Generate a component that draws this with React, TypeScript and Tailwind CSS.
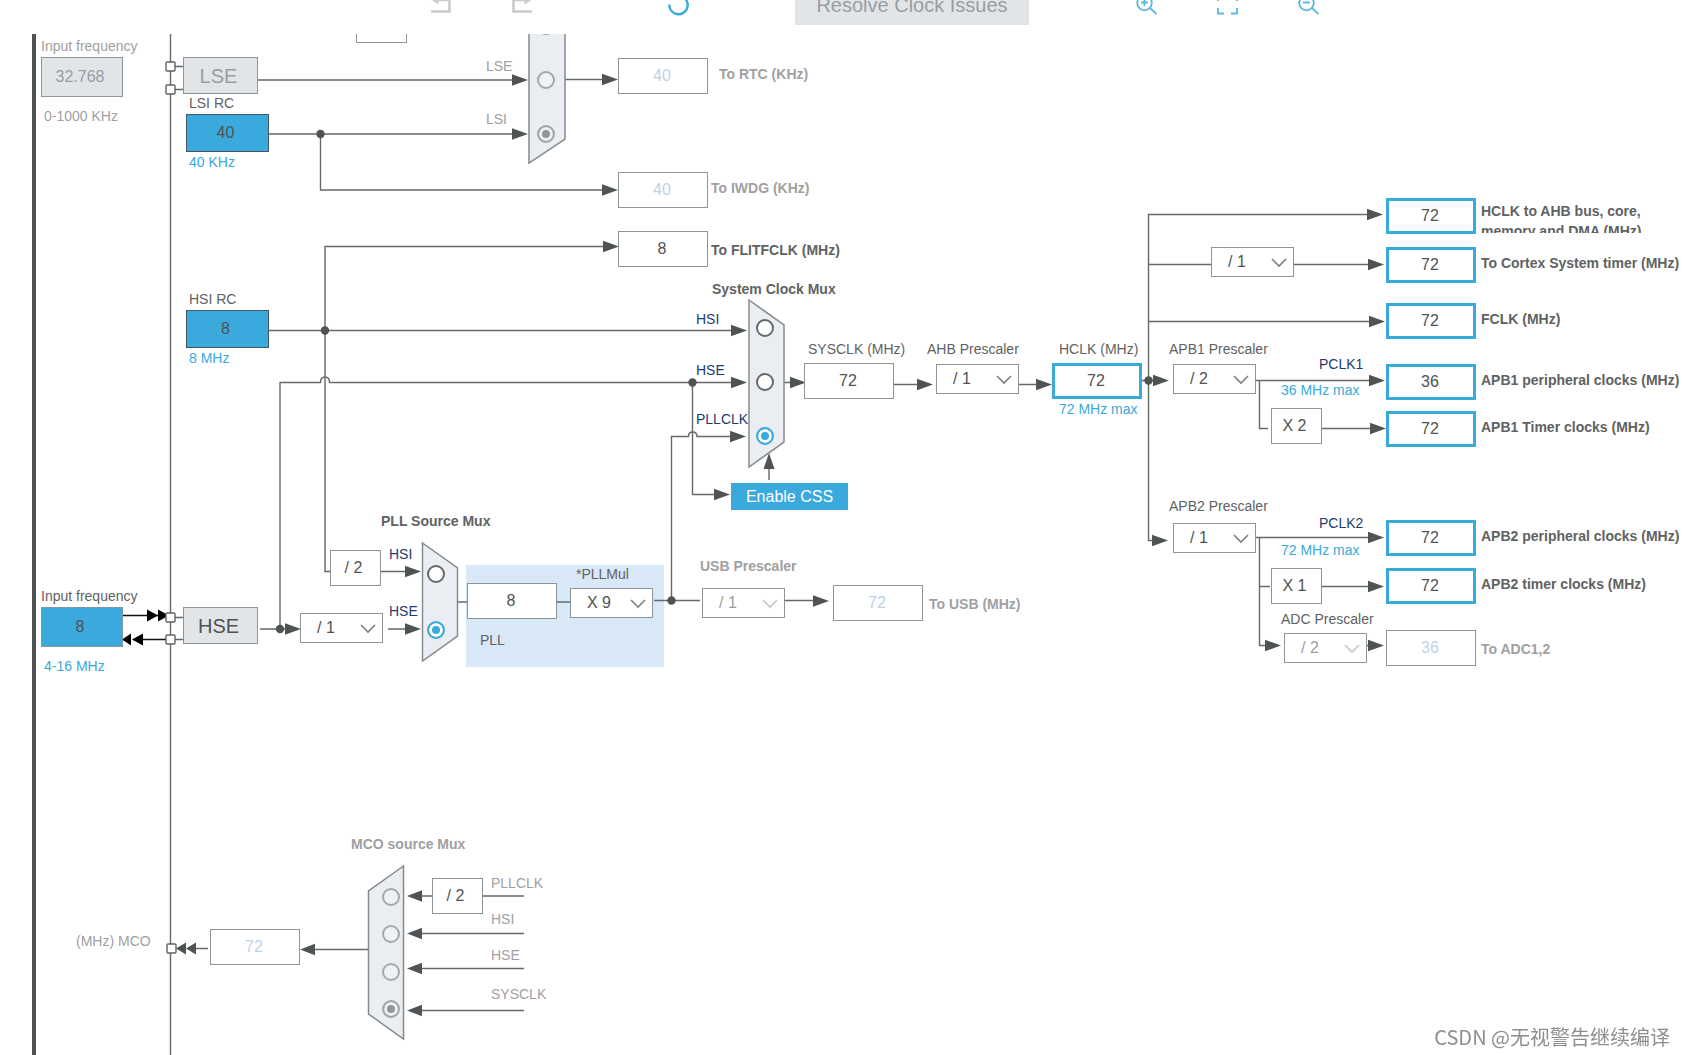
import { useState } from 'react';
import type { ReactNode } from 'react';
import clsx from 'clsx';

type Tone = 'normal' | 'muted' | 'active' | 'source' | 'input' | 'off';

const fieldTones: Record<Tone, string> = {
  normal: 'h-9 w-[90px] border border-[#8d949b] bg-white text-[#505353]',
  muted: 'h-9 w-[90px] border border-[#8d949b] bg-white text-[#bcd2ea]',
  active: 'h-9 w-[90px] border-3 border-[#3aa9dc] bg-white text-[#505353]',
  source: 'h-[38px] w-[83px] border border-[#3f5864] bg-[#3aa9dc] text-[#505353]',
  input: 'h-10 w-[82px] border border-[#7e98a4] bg-[#3aa9dc] text-[#505353]',
  off: 'h-10 w-[82px] border border-[#8d949b] bg-[#e1e5e8] text-[#989ea2]',
};

interface FieldProps {
  id: string;
  name: string;
  value: string;
  className?: string;
  tone?: Tone;
}

// Editable frequency box
function Field({ id, name, value, className, tone = 'normal' }: FieldProps) {
  const [text, setText] = useState(value);

  return (
    <input
      id={id}
      type="text"
      aria-label={name}
      value={text}
      disabled={tone === 'muted' || tone === 'off'}
      onChange={(e) => setText(e.target.value)}
      className={clsx('shrink-0 pr-0.5 text-center text-base outline-none', fieldTones[tone], className)}
    />
  );
}

type LabelTone = 'dark' | 'grey' | 'blue' | 'navy';

const labelTones: Record<LabelTone, string> = {
  dark: 'text-[#606262]',
  grey: 'text-[#a0a0a2]',
  blue: 'text-[#3aa9dc]',
  navy: 'text-[#1d3c6b]',
};

interface LabelProps {
  htmlFor: string;
  className?: string;
  tone?: LabelTone;
  bold?: boolean;
  children: ReactNode;
}

function Label({ htmlFor, className, tone = 'dark', bold, children }: LabelProps) {
  return (
    <label
      htmlFor={htmlFor}
      className={clsx('text-sm leading-5 whitespace-nowrap', bold && 'font-bold', labelTones[tone], className)}
    >
      {children}
    </label>
  );
}

interface SourceProps {
  id: string;
  label: string;
  value: string;
  note: string;
  tone: Tone;
  className: string;
}

// Oscillator: name above the box, allowed range below it
function Source({ id, label, value, note, tone, className }: SourceProps) {
  const external = tone !== 'source';
  const off = tone === 'off';

  return (
    <div className={clsx('absolute flex flex-col items-start', className)}>
      <Label htmlFor={id} tone={off ? 'grey' : 'dark'} className={clsx('mb-px', !external && 'pl-[3px]')}>{label}</Label>
      <Field id={id} name={label} value={value} tone={tone} className="pr-1" />
      <Label htmlFor={id} tone={off ? 'grey' : 'blue'} className={clsx('pl-[3px]', external && 'mt-[9px]')}>{note}</Label>
    </div>
  );
}

interface OutputProps {
  id: string;
  value: string;
  tone?: Tone;
  low?: boolean;
  className: string;
  children: ReactNode;
}

// Clock consumer: box followed by its caption
function Output({ id, value, tone = 'active', low, className, children }: OutputProps) {
  return (
    <div className={clsx('absolute flex items-center', className)}>
      <Field id={id} name={id} value={value} tone={tone} />
      <Label
        htmlFor={id}
        tone={tone === 'muted' ? 'grey' : 'dark'}
        bold
        className={clsx('max-h-8 overflow-hidden', low ? 'mt-0.5' : 'mb-1')}
      >
        {children}
      </Label>
    </div>
  );
}

interface PrescalerProps {
  id: string;
  name: string;
  value: string;
  options: string[];
  className: string;
  disabled?: boolean;
}

function Prescaler({ id, name, value, options, className, disabled }: PrescalerProps) {
  return (
    <div className={clsx('absolute h-[30px] w-[83px]', className)}>
      <select
        id={id}
        aria-label={name}
        defaultValue={value}
        disabled={disabled}
        className={clsx(
          'h-full w-full appearance-none border border-[#8d949b] bg-white pl-4 text-base leading-5 opacity-100 outline-none',
          disabled ? 'text-[#9b9fa2]' : 'text-[#505353]'
        )}
      >
        {options.map((option) => (
          <option key={option}>{option}</option>
        ))}
      </select>
      <svg
        width="16"
        height="10"
        viewBox="0 0 16 10"
        fill="none"
        className={clsx('pointer-events-none absolute top-[11px] right-[7px]', disabled ? 'text-[#c4c6c8]' : 'text-[#7c8082]')}
      >
        <path d="M1 1L8 8L15 1" stroke="currentColor" strokeWidth="1.6" />
      </svg>
    </div>
  );
}

interface MuxInputProps {
  id: string;
  group: string;
  name: string;
  className: string;
  checked?: boolean;
  disabled?: boolean;
}

function MuxInput({ id, group, name, className, checked, disabled }: MuxInputProps) {
  return (
    <input
      id={id}
      type="radio"
      name={group}
      aria-label={name}
      defaultChecked={checked}
      disabled={disabled}
      className={clsx(
        'absolute size-[18px] appearance-none rounded-full border-2',
        disabled
          ? 'border-[#a3a8ac] bg-[#f0f1f3] checked:bg-[#8f979d] checked:shadow-[inset_0_0_0_3px_#f0f1f3]'
          : 'border-[#66696a] bg-white checked:border-[#3aa9dc] checked:bg-[#3aa9dc] checked:shadow-[inset_0_0_0_3px_white]',
        className
      )}
    />
  );
}

// Fixed multiplier / divider
function Factor({ className, children }: { className: string; children?: ReactNode }) {
  return (
    <div
      className={clsx(
        'absolute flex h-9 w-[51px] items-center justify-center border border-[#8d949b] bg-white pr-1 text-base text-[#505353]',
        className
      )}
    >
      {children}
    </div>
  );
}

const wires = [
  // LSE / LSI
  'M175 66.5H183 M175 89.5H183 M258 80H514 M269 134H514 M320.5 134V190H604 M565 79.5H604',
  // HSI
  'M269 330.5H733 M606 246.5H325V571.5H330 M381 571.5H406',
  // HSE
  'M175 617.5H183 M175 639.5H183 M260 629H292 M280 629V382.5H320.5 Q320.5 377 325 377 Q329.5 377 329.5 382.5 H733 M388 629H406',
  'M692.5 382.5V494.5H716',
  // PLL
  'M457 602H467 M557 602H570 M654 600.5H700 M671.5 600.5V436.5H688.5 Q688.5 432 692.5 432 Q697 432 697 436.5 H732 M785 600.5H815',
  // SYSCLK to HCLK
  'M769 480V467 M784 382.5H794 M894 384.5H918 M1019 384.5H1037 M1141 380.5H1155',
  // Bus
  'M1368 214.5H1148.5V540.5H1154 M1148.5 264.5H1211 M1293 264.5H1370 M1148.5 321.5H1371',
  'M1256 380.5H1371 M1259.5 380.5V428.5H1268 M1322 428.5H1372',
  'M1256 537.5H1370 M1259.5 537.5V645.5H1267 M1259.5 586.5H1270 M1322 586.5H1370 M1366 645.5H1369',
  // MCO
  'M368 949.5H314 M208 948.5H195 M420 896H432 M483 896H524 M420 933.5H524 M420 968.5H524 M420 1010.5H524',
];

// Tip of each arrow head
const rightHeads = [
  [528, 80], [528, 134], [618, 79.5], [618, 190], [619, 246.5], [747, 330.5], [747, 382.5], [746, 436.5],
  [730, 494.5], [421, 571.5], [421, 629], [301, 629], [829, 601], [806, 382.5], [933, 384.5], [1052, 384.5],
  [1169, 380.5], [1168, 540.5], [1383, 214.5], [1384, 264.5], [1385, 321.5], [1385, 380.5], [1386, 428.5],
  [1384, 537.5], [1384, 586.5], [1281, 645.5], [1384, 645.5],
];

const leftHeads = [
  [407, 896], [407, 933.5], [407, 968.5], [407, 1010.5], [300, 949.5],
];

const joints = [
  [320.5, 134], [325, 330.5], [280, 629], [692.5, 382.5], [671.5, 600.5], [1148.5, 380.5],
];

const pins = [
  [170.5, 66.5], [170.5, 89.5], [170.5, 617.5], [170.5, 639.5], [171.5, 948.5],
];

const muxes = [
  'M529 0L565 25V139L529 163Z',
  'M749 300L784 325V442L749 467Z',
  'M422.5 543L457.5 568V636L422.5 661Z',
  'M403.5 866L368.5 891V1014L403.5 1039Z',
];

function Wiring() {
  return (
    <svg className="absolute inset-0 h-full w-full" aria-hidden="true">
      <rect x="32" width="4" height="100%" fill="#505353" />
      <line x1="170.5" x2="170.5" y1="0" y2="100%" stroke="#666969" strokeWidth="1.4" />
      <g fill="none" stroke="#666969" strokeWidth="1.4">
        {wires.map((d) => (
          <path key={d} d={d} />
        ))}
      </g>
      <g fill="#505353">
        {rightHeads.map(([x, y]) => (
          <path key={`${x}-${y}`} d={`M${x} ${y}l-16 -5.7v11.4z`} />
        ))}
        {leftHeads.map(([x, y]) => (
          <path key={`${x}-${y}`} d={`M${x} ${y}l15 -5.7v11.4z`} />
        ))}
        <path d="M769 453l-5.5 16h11z M186 948.5l10 -6v12z M176 948.5l10 -6v12z" />
        {joints.map(([x, y]) => (
          <circle key={`${x}-${y}`} cx={x} cy={y} r="4.2" />
        ))}
      </g>
      {/* Crystal lines */}
      <path d="M123 615.5H166 M166 639.5H133" stroke="#111" strokeWidth="1.3" />
      <path d="M158 615.5l-11 -6v12z M169 615.5l-11 -6v12z M132 639.5l11 -6v12z M122 639.5l9 -6v12z" fill="#000" />
      <g fill="#fff" stroke="#606363" strokeWidth="1.4">
        {pins.map(([x, y]) => (
          <rect key={`${x}-${y}`} x={x - 4.5} y={y - 4.5} width="9" height="9" rx="1" />
        ))}
      </g>
      <g fill="#eaeef2" stroke="#858a8e" strokeWidth="1.5">
        {muxes.map((d) => (
          <path key={d} d={d} />
        ))}
      </g>
    </svg>
  );
}

function Toolbar() {
  const button = 'flex h-10 shrink-0 items-center';

  return (
    <header className="flex h-[34px] shrink-0 items-end pb-[9px] pl-[431px]">
      <button type="button" aria-label="Undo" className={clsx(button, 'text-[#cbcbcd]')}>
        <svg width="20" height="18" viewBox="0 0 20 18" fill="none" stroke="currentColor" strokeWidth="2.6">
          <path d="M0 15.5H18.5V4H5" />
          <path d="M7.5 -1V8.5L0 3.5Z" fill="currentColor" stroke="none" />
        </svg>
      </button>
      <button type="button" aria-label="Redo" className={clsx(button, 'ml-[61px] text-[#cbcbcd]')}>
        <svg width="20" height="18" viewBox="0 0 20 18" fill="none" stroke="currentColor" strokeWidth="2.6">
          <path d="M20 15.5H1.5V4H15" />
          <path d="M12.5 -1V8.5L20 3.5Z" fill="currentColor" stroke="none" />
        </svg>
      </button>
      <button type="button" aria-label="Refresh" className={clsx(button, 'ml-[136px] text-[#3aa9dc]')}>
        <svg width="21" height="22" viewBox="0 0 21 22" fill="none" stroke="currentColor" strokeWidth="2.4">
          <path d="M1.3 10.5A9.2 9.2 0 1 0 15 3" />
        </svg>
      </button>
      <button type="button" className="ml-[106px] h-10 w-[234px] shrink-0 bg-[#e1e5e8] text-xl text-[#989ea2]">
        Resolve Clock Issues
      </button>
      <button type="button" aria-label="Zoom in" className={clsx(button, 'ml-[107px] text-[#5bb8e2]')}>
        <svg width="21" height="20" viewBox="0 0 21 20" fill="none" stroke="currentColor" strokeWidth="1.8">
          <circle cx="8.5" cy="8" r="7.3" />
          <path d="M14 13L20.5 19 M5 7.5H12 M8.5 4V11" />
        </svg>
      </button>
      <button type="button" aria-label="Fit to window" className={clsx(button, 'ml-15 text-[#5bb8e2]')}>
        <svg width="21" height="20" viewBox="0 0 21 20" fill="none" stroke="currentColor" strokeWidth="1.8">
          <path d="M1 6V1H7 M14 1H20V6 M20 13V18.5H14 M7 18.5H1V13" />
        </svg>
      </button>
      <button type="button" aria-label="Zoom out" className={clsx(button, 'ml-15 text-[#5bb8e2]')}>
        <svg width="21" height="20" viewBox="0 0 21 20" fill="none" stroke="currentColor" strokeWidth="1.8">
          <circle cx="8.5" cy="8" r="7.3" />
          <path d="M14 13L20.5 19 M5 7.5H12" />
        </svg>
      </button>
    </header>
  );
}

const dividers = ['/ 1', '/ 2', '/ 4', '/ 8', '/ 16'];

function LowSpeedClocks() {
  return (
    <>
      <Source id="lse-input" label="Input frequency" value="32.768" note="0-1000 KHz" tone="off" className="top-[36px] left-[41px]" />
      <button type="button" className="absolute top-[57px] left-[183px] h-[37px] w-[75px] border border-[#8d949b] bg-[#e1e5e8] pr-1 text-xl text-[#989ea2]">
        LSE
      </button>
      <Source id="lsi" label="LSI RC" value="40" note="40 KHz" tone="source" className="top-[93px] left-[186px]" />

      {/* HSE divider of the RTC, mostly scrolled out */}
      <Factor className="top-[7px] left-[356px]" />
      <Label htmlFor="rtc-lse" tone="grey" className="absolute top-[56px] left-[486px]">LSE</Label>
      <Label htmlFor="rtc-lsi" tone="grey" className="absolute top-[109px] left-[486px]">LSI</Label>
      <MuxInput id="rtc-hse" group="rtc" name="HSE_RTC" disabled className="top-[17px] left-[537px]" />
      <MuxInput id="rtc-lse" group="rtc" name="LSE" disabled className="top-[71px] left-[537px]" />
      <MuxInput id="rtc-lsi" group="rtc" name="LSI" disabled checked className="top-[125px] left-[537px]" />

      <Output id="rtc" value="40" tone="muted" className="top-[58px] left-[618px] gap-[11px]">To RTC (KHz)</Output>
      <Output id="iwdg" value="40" tone="muted" className="top-[172px] left-[618px] gap-[3px]">To IWDG (KHz)</Output>
      <Output id="flitfclk" value="8" tone="normal" low className="top-[231px] left-[618px] gap-[3px]">To FLITFCLK (MHz)</Output>
    </>
  );
}

function HighSpeedClocks() {
  return (
    <>
      <Source id="hsi" label="HSI RC" value="8" note="8 MHz" tone="source" className="top-[289px] left-[186px]" />
      <Source id="hse-input" label="Input frequency" value="8" note="4-16 MHz" tone="input" className="top-[586px] left-[41px]" />
      <button type="button" className="absolute top-[607px] left-[183px] h-[37px] w-[75px] border border-[#8d949b] bg-[#e1e5e8] pr-1 text-xl text-[#505353]">
        HSE
      </button>
      <Prescaler id="hse-div" name="HSE divider" value="/ 1" options={dividers} className="top-[613px] left-[300px]" />
      <Factor className="top-[550px] left-[330px]">/ 2</Factor>
    </>
  );
}

function Pll() {
  return (
    <>
      <span className="absolute top-[511px] left-[381px] text-sm leading-5 font-bold text-[#606262]">PLL Source Mux</span>
      <Label htmlFor="pll-hsi" tone="navy" className="absolute top-[544px] left-[389px]">HSI</Label>
      <Label htmlFor="pll-hse" tone="navy" className="absolute top-[601px] left-[389px]">HSE</Label>
      <MuxInput id="pll-hsi" group="pll" name="HSI" className="top-[565px] left-[427px]" />
      <MuxInput id="pll-hse" group="pll" name="HSE" checked className="top-[621px] left-[427px]" />

      <Field id="pll-in" name="PLL input" value="8" className="absolute top-[583px] left-[467px]" />
      <Label htmlFor="pll-mul" className="absolute top-[564px] left-[576px]">*PLLMul</Label>
      <Prescaler id="pll-mul" name="PLLMul" value="X 9" options={['X 2', 'X 4', 'X 6', 'X 8', 'X 9', 'X 16']} className="top-[588px] left-[570px]" />
      <Label htmlFor="pll-in" className="absolute top-[630px] left-[480px]">PLL</Label>

      <Label htmlFor="usb-div" tone="grey" bold className="absolute top-[556px] left-[700px]">USB Prescaler</Label>
      <Prescaler id="usb-div" name="USB prescaler" value="/ 1" options={['/ 1', '/ 1.5']} disabled className="top-[588px] left-[702px]" />
      <Output id="usb" value="72" tone="muted" low className="top-[585px] left-[833px] gap-1.5">To USB (MHz)</Output>
    </>
  );
}

function SystemClock() {
  return (
    <>
      <span className="absolute top-[279px] left-[712px] text-sm leading-5 font-bold text-[#606262]">System Clock Mux</span>
      <Label htmlFor="sys-hsi" tone="navy" className="absolute top-[309px] left-[696px]">HSI</Label>
      <Label htmlFor="sys-hse" tone="navy" className="absolute top-[360px] left-[696px]">HSE</Label>
      <Label htmlFor="sys-pll" tone="navy" className="absolute top-[409px] left-[696px]">PLLCLK</Label>
      <MuxInput id="sys-hsi" group="sysclk" name="HSI" className="top-[319px] left-[756px]" />
      <MuxInput id="sys-hse" group="sysclk" name="HSE" className="top-[373px] left-[756px]" />
      <MuxInput id="sys-pll" group="sysclk" name="PLLCLK" checked className="top-[427px] left-[756px]" />
      <button type="button" className="absolute top-[483px] left-[731px] h-[27px] w-[117px] bg-[#3aa9dc] text-base leading-5 text-white">
        Enable CSS
      </button>

      <div className="absolute top-[339px] left-[804px] flex flex-col gap-1">
        <Label htmlFor="sysclk" className="pl-1">SYSCLK (MHz)</Label>
        <Field id="sysclk" name="SYSCLK" value="72" />
      </div>
      <Label htmlFor="ahb-div" className="absolute top-[339px] left-[927px]">AHB Prescaler</Label>
      <Prescaler id="ahb-div" name="AHB prescaler" value="/ 1" options={dividers} className="top-[364px] left-[936px]" />
      <div className="absolute top-[339px] left-[1052px] flex flex-col">
        <Label htmlFor="hclk" className="mb-1 pl-[7px]">HCLK (MHz)</Label>
        <Field id="hclk" name="HCLK" value="72" tone="active" />
        <Label htmlFor="hclk" tone="blue" className="pl-[7px]">72 MHz max</Label>
      </div>
    </>
  );
}

function BusClocks() {
  return (
    <>
      <Output id="ahb" value="72" low className="top-[198px] left-[1386px] gap-[5px]">
        HCLK to AHB bus, core,
        <br />
        memory and DMA (MHz)
      </Output>
      <Prescaler id="cortex-div" name="Cortex timer prescaler" value="/ 1" options={['/ 1', '/ 8']} className="top-[247px] left-[1211px]" />
      <Output id="cortex" value="72" className="top-[247px] left-[1386px] gap-[5px]">To Cortex System timer (MHz)</Output>
      <Output id="fclk" value="72" className="top-[303px] left-[1386px] gap-[5px]">FCLK (MHz)</Output>

      {/* APB1 */}
      <Label htmlFor="apb1-div" className="absolute top-[339px] left-[1169px]">APB1 Prescaler</Label>
      <Prescaler id="apb1-div" name="APB1 prescaler" value="/ 2" options={dividers} className="top-[364px] left-[1173px]" />
      <Label htmlFor="apb1" tone="navy" className="absolute top-[354px] left-[1319px]">PCLK1</Label>
      <Label htmlFor="apb1" tone="blue" className="absolute top-[380px] left-[1281px]">36 MHz max</Label>
      <Output id="apb1" value="36" className="top-[364px] left-[1386px] gap-[5px]">APB1 peripheral clocks (MHz)</Output>
      <Factor className="top-[408px] left-[1271px]">X 2</Factor>
      <Output id="apb1-timer" value="72" className="top-[411px] left-[1386px] gap-[5px]">APB1 Timer clocks (MHz)</Output>

      {/* APB2 */}
      <Label htmlFor="apb2-div" className="absolute top-[496px] left-[1169px]">APB2 Prescaler</Label>
      <Prescaler id="apb2-div" name="APB2 prescaler" value="/ 1" options={dividers} className="top-[523px] left-[1173px]" />
      <Label htmlFor="apb2" tone="navy" className="absolute top-[513px] left-[1319px]">PCLK2</Label>
      <Label htmlFor="apb2" tone="blue" className="absolute top-[540px] left-[1281px]">72 MHz max</Label>
      <Output id="apb2" value="72" className="top-[520px] left-[1386px] gap-[5px]">APB2 peripheral clocks (MHz)</Output>
      <Factor className="top-[568px] left-[1271px]">X 1</Factor>
      <Output id="apb2-timer" value="72" className="top-[568px] left-[1386px] gap-[5px]">APB2 timer clocks (MHz)</Output>

      <Label htmlFor="adc-div" className="absolute top-[609px] left-[1281px]">ADC Prescaler</Label>
      <Prescaler id="adc-div" name="ADC prescaler" value="/ 2" options={['/ 2', '/ 4', '/ 6', '/ 8']} disabled className="top-[633px] left-[1284px]" />
      <Output id="adc" value="36" tone="muted" low className="top-[630px] left-[1386px] gap-[5px]">To ADC1,2</Output>
    </>
  );
}

function ClockOutput() {
  return (
    <>
      <span className="absolute top-[834px] left-[351px] text-sm leading-5 font-bold text-[#a0a0a2]">MCO source Mux</span>
      <MuxInput id="mco-pll" group="mco" name="PLLCLK" disabled className="top-[888px] left-[382px]" />
      <MuxInput id="mco-hsi" group="mco" name="HSI" disabled className="top-[925px] left-[382px]" />
      <MuxInput id="mco-hse" group="mco" name="HSE" disabled className="top-[963px] left-[382px]" />
      <MuxInput id="mco-sys" group="mco" name="SYSCLK" disabled checked className="top-[1000px] left-[382px]" />
      <Factor className="top-[878px] left-[432px]">/ 2</Factor>
      <Label htmlFor="mco-pll" tone="grey" className="absolute top-[873px] left-[491px]">PLLCLK</Label>
      <Label htmlFor="mco-hsi" tone="grey" className="absolute top-[909px] left-[491px]">HSI</Label>
      <Label htmlFor="mco-hse" tone="grey" className="absolute top-[945px] left-[491px]">HSE</Label>
      <Label htmlFor="mco-sys" tone="grey" className="absolute top-[984px] left-[491px]">SYSCLK</Label>
      <Field id="mco" name="MCO" value="72" tone="muted" className="absolute top-[929px] left-[210px]" />
      <Label htmlFor="mco" tone="grey" className="absolute top-[931px] left-[76px]">(MHz) MCO</Label>
    </>
  );
}

export default function App() {
  return (
    <div className="flex h-screen flex-col bg-white font-['Liberation_Sans',Arial,sans-serif]">
      <Toolbar />
      <main className="flex-1 overflow-auto">
        {/* The sheet starts above the visible area, its top edge is cut off by the toolbar */}
        <div className="relative -mt-[34px] h-[calc(100%+34px)] min-h-[1045px]">
          <div className="absolute top-[565px] left-[466px] h-[102px] w-[198px] bg-[#d9e8f6]" />
          <Wiring />
          <LowSpeedClocks />
          <HighSpeedClocks />
          <Pll />
          <SystemClock />
          <BusClocks />
          <ClockOutput />
        </div>
      </main>
      <p className="fixed right-4 bottom-1 text-xl text-[#8e8e8e] font-['Noto_Sans_CJK_SC',sans-serif]">
        CSDN @无视警告继续编译
      </p>
    </div>
  );
}
